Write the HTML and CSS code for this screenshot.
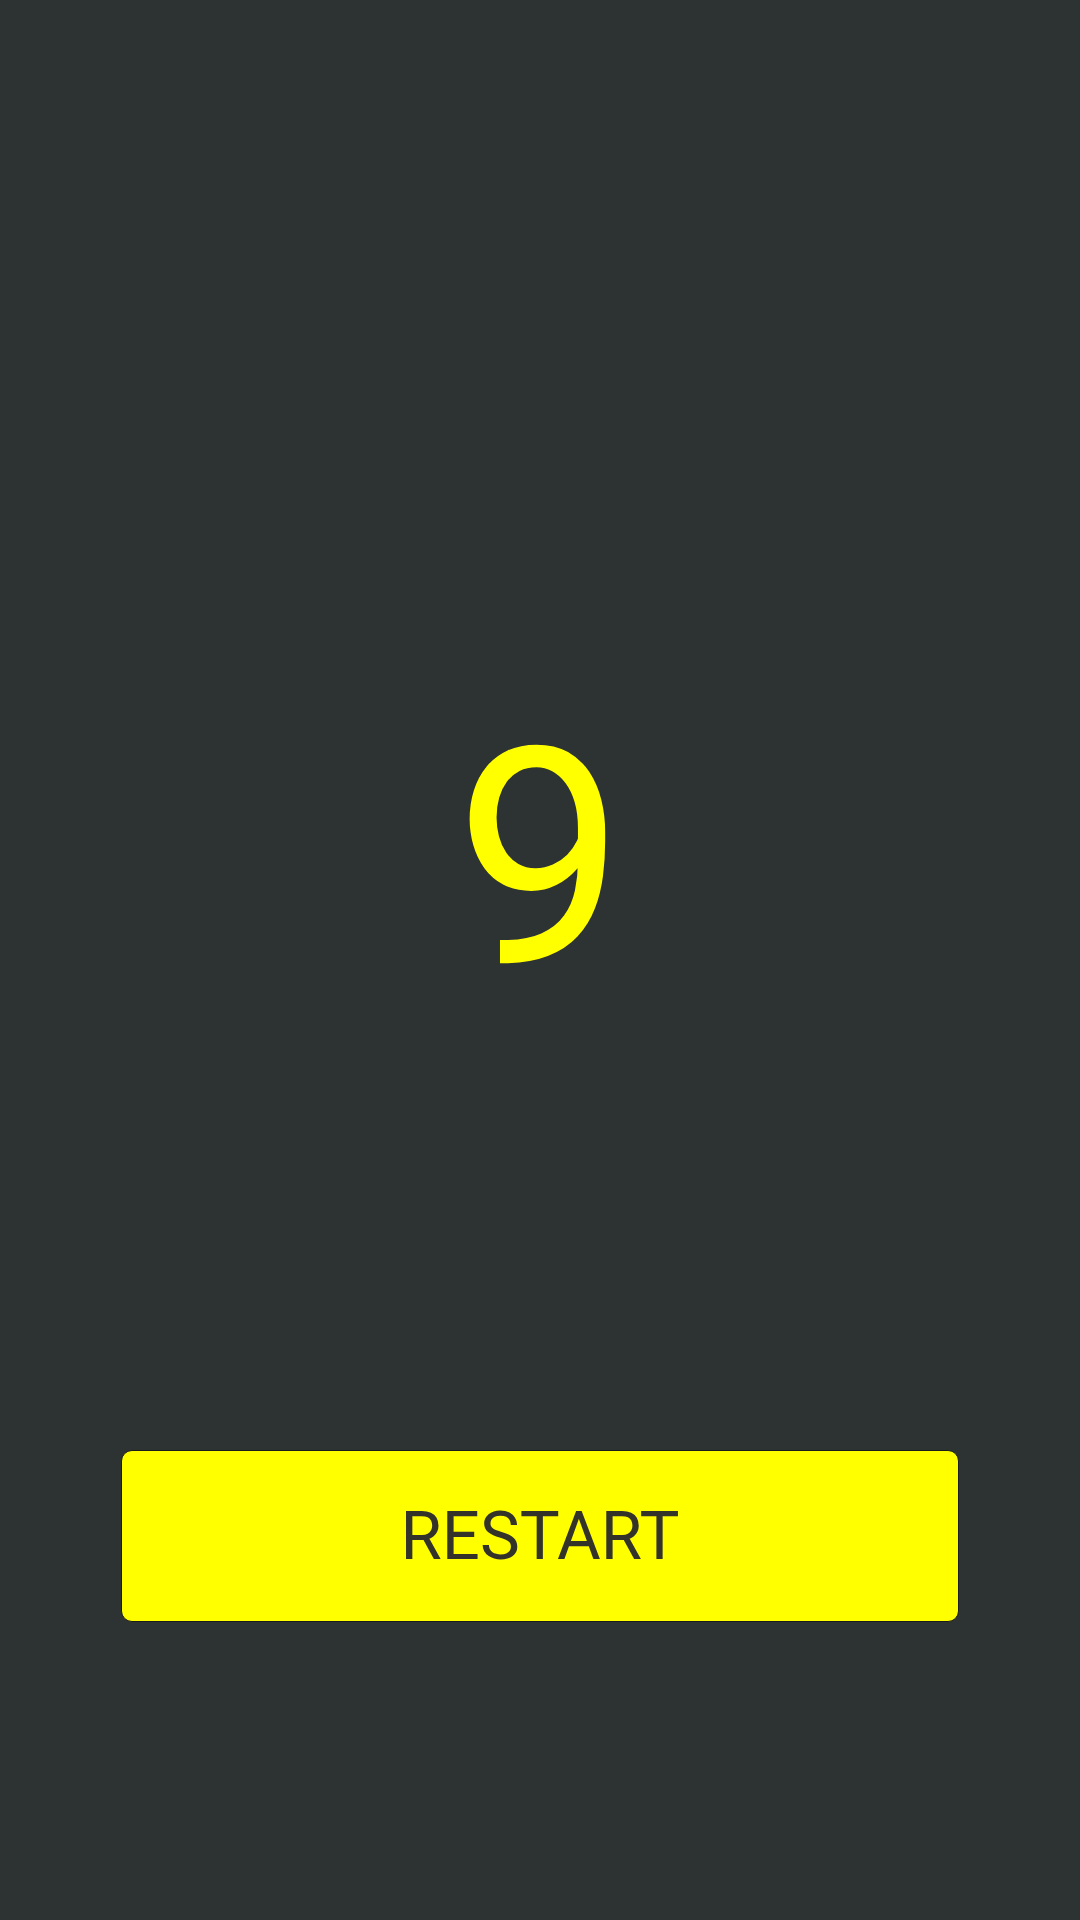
FILE: index.html
```html
<!DOCTYPE html>
<html><head><link rel="stylesheet" href="styles.css"></head>
<body>
<main class="screen">
  <div class="counter">9</div>
  <button class="restart">RESTART</button>
</main>
</body></html>
```
FILE: styles.css
```css
html,body{margin:0;padding:0;}
body{background:#2d3232;}
.screen{width:1080px;height:1920px;display:flex;flex-direction:column;align-items:center;box-sizing:border-box;padding-top:708px;}
.counter{font-family:Roboto,sans-serif;font-size:303px;line-height:303px;height:303px;color:#ffff00;}
.restart{margin-top:439px;width:838px;height:172px;box-sizing:border-box;background:#ffff00;border:1px solid #1a1c1a;border-radius:11px;font-family:Roboto,sans-serif;font-size:67px;color:#33332a;display:flex;align-items:center;justify-content:center;padding:0;}
```
